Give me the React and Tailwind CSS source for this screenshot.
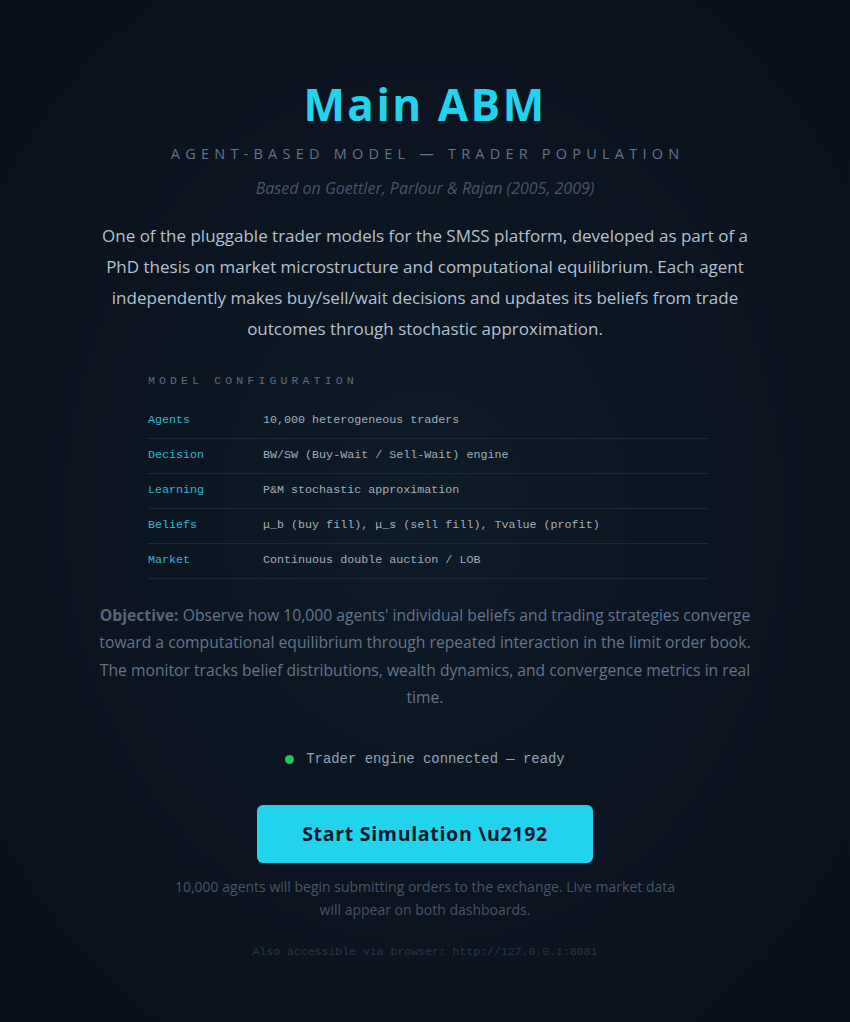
import React from "react";

const config = [
  ["Agents", "10,000 heterogeneous traders"],
  ["Decision", "BW/SW (Buy-Wait / Sell-Wait) engine"],
  ["Learning", "P&M stochastic approximation"],
  ["Beliefs", "μ_b (buy fill), μ_s (sell fill), Tvalue (profit)"],
  ["Market", "Continuous double auction / LOB"],
];

const sans = "font-['Open_Sans',sans-serif]";
const mono = "font-['Liberation_Mono',monospace]";

const App = () => {
  return (
    <div
      className={`min-h-screen w-full bg-[#0a121d] bg-[radial-gradient(ellipse_at_center,#0e1b29_0%,#0b1420_55%,#09101a_100%)] ${sans} flex flex-col items-center pt-[78px] pb-12`}
    >
      <h1 className="text-[44px] leading-[52px] font-bold tracking-[2.5px] text-[#22d3ee]">
        Main ABM
      </h1>
      <div className="mt-[13px] text-[14.5px] tracking-[0.36em] text-[#64748b] pl-[0.36em]">
        AGENT-BASED MODEL — TRADER POPULATION
      </div>
      <div className="mt-[11px] text-[16px] italic text-[#475569]">
        Based on Goettler, Parlour &amp; Rajan (2005, 2009)
      </div>

      <p className="mt-[20px] w-[660px] text-center text-[17px] leading-[31px] text-[#b4c0cf]">
        One of the pluggable trader models for the SMSS platform, developed as part of a
        PhD thesis on market microstructure and computational equilibrium. Each agent
        independently makes buy/sell/wait decisions and updates its beliefs from trade
        outcomes through stochastic approximation.
      </p>

      <div className="mt-[28px] w-[560px] ml-[6px]">
        <div className={`${mono} text-[11.5px] tracking-[0.36em] text-[#5b6b80] mb-[15px]`}>
          MODEL CONFIGURATION
        </div>
        {config.map(([k, v]) => (
          <div
            key={k}
            className={`${mono} flex items-center h-[35px] border-b border-[#1b2838] text-[11.7px]`}
          >
            <span className="w-[115px] shrink-0 text-[#2fb8d0]">{k}</span>
            <span className="text-[#a3adbb]">{v}</span>
          </div>
        ))}
      </div>

      <p className="mt-[23px] w-[660px] text-center text-[15.7px] leading-[27.3px] text-[#64748b]">
        <strong className="font-bold text-[#56657a]">Objective:</strong> Observe how 10,000
        agents' individual beliefs and trading strategies converge toward a computational
        equilibrium through repeated interaction in the limit order book. The monitor tracks
        belief distributions, wealth dynamics, and convergence metrics in real time.
      </p>

      <div className={`mt-[38px] flex items-center gap-[12px] ${mono} text-[13.9px] text-[#94a3b8]`}>
        <span className="w-[9px] h-[9px] rounded-full bg-[#22c55e]" />
        <span>Trader engine connected — ready</span>
      </div>

      <button className="mt-[35px] w-[336px] h-[58px] rounded-[6px] bg-[#22d3ee] text-[19.5px] font-bold tracking-[0.7px] text-[#0f172a]">
        Start Simulation \u2192
      </button>

      <p className="mt-[12px] w-[520px] text-center text-[14px] leading-[23px] text-[#475569]">
        10,000 agents will begin submitting orders to the exchange. Live market data will
        appear on both dashboards.
      </p>

      <div className={`mt-[22px] ${mono} text-[11.5px] text-[#2a3646]`}>
        Also accessible via browser: http://127.0.0.1:8081
      </div>
    </div>
  );
};

export default App;
